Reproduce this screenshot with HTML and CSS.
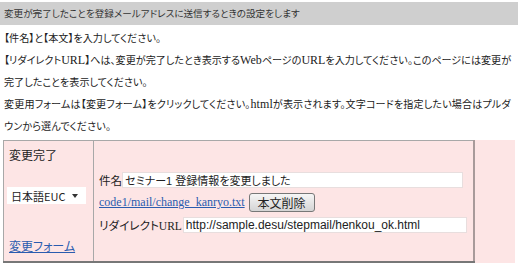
FILE: index.html
```html
<!DOCTYPE html>
<html lang="ja">
<head>
    <meta charset="UTF-8">
    <title>変更完了メール設定</title>
    <link rel="stylesheet" href="styles.css">
</head>
<body>

<div class="title">変更が完了したことを登録メールアドレスに送信するときの設定をします</div>

<div class="notes">
    <p>【件名】と【本文】を入力してください。</p>
    <p>【リダイレクト<span class="latin">URL</span>】へは、変更が完了したとき表示する<span class="latin">Web</span>ページの<span class="latin">URL</span>を入力してください。このページには変更が完了したことを表示してください。</p>
    <p class="last">変更用フォームは【変更フォーム】をクリックしてください。<span class="latin">html</span>が表示されます。文字コードを指定したい場合はプルダウンから選んでください。</p>
</div>

<div class="panel">
    <table class="mail-table">
        <tr>
            <td class="side">
                <div class="side-title">変更完了</div>
                <div class="select-wrap">
                    <select class="charset">
                        <option>日本語EUC</option>
                        <option>Shift_JIS</option>
                        <option>UTF-8</option>
                    </select>
                </div>
                <a href="#" class="side-link">変更フォーム</a>
            </td>
            <td class="main">
                <div class="row">
                    <label>件名</label>
                    <input type="text" class="subject" value="セミナー1 登録情報を変更しました">
                </div>
                <div class="row">
                    <a href="#" class="file-link">code1/mail/change_kanryo.txt</a>
                    <button type="button" class="btn">本文削除</button>
                </div>
                <div class="row">
                    <label>リダイレクト<span class="latin">URL</span></label>
                    <input type="text" class="redirect" value="http://sample.desu/stepmail/henkou_ok.html">
                </div>
            </td>
        </tr>
    </table>
</div>

</body>
</html>
```

FILE: styles.css
```css
body {
    margin: 0;
    padding: 2px 0 0 0;
    font-family: "Noto Sans CJK JP", sans-serif;
    font-size: 10.5px;
    color: #222;
    font-feature-settings: "palt";
}
.latin {
    font-family: "Liberation Serif", serif;
    font-size: 12px;
    line-height: 1;
}
.title {
    background-color: #cfcfcf;
    height: 23px;
    line-height: 23px;
    padding-left: 4px;
    font-size: 9.6px;
    color: #333;
}
.notes {
    padding: 2px 4px 0 4px;
    font-size: 10.1px;
}
.notes p {
    margin: 0;
    line-height: 22px;
}
.notes .last {
    letter-spacing: 0.12px;
}
.panel {
    background-color: #fde5e5;
    margin: 3px 3px 0 3px;
}
.mail-table {
    border-collapse: collapse;
    width: 472px;
    border-top: 1px solid #a8a8a8;
    border-left: 1px solid #a8a8a8;
    border-right: 2px solid #a89a9a;
    border-bottom: 2px solid #777;
}
.mail-table td {
    padding: 0;
}
.side {
    width: 89px;
    height: 120px;
    border-right: 1px solid #a8a8a8;
    vertical-align: top;
    font-size: 12px;
}
.side-title {
    padding: 5px 0 0 5px;
    height: 41px;
}
.select-wrap {
    position: relative;
    margin-left: 3px;
    width: 79px;
    height: 17px;
    background-color: #fff;
}
.select-wrap::after {
    content: "";
    position: absolute;
    right: 8px;
    top: 7px;
    border-left: 3px solid transparent;
    border-right: 3px solid transparent;
    border-top: 4px solid #333;
}
.charset {
    appearance: none;
    -webkit-appearance: none;
    width: 100%;
    height: 17px;
    font-family: "Noto Sans CJK JP", sans-serif;
    font-size: 11px;
    border: none;
    background: transparent;
    padding: 0 4px;
    color: #222;
}
.side-link {
    display: block;
    margin: 33px 0 0 5px;
    color: #2a5caf;
}
.mail-table .main {
    vertical-align: top;
    padding: 28px 0 0 5px;
}
.row {
    display: flex;
    align-items: center;
    height: 22.5px;
}
.row label {
    font-size: 11.6px;
}
.row label .latin {
    font-size: 11.5px;
}
.row input {
    height: 16px;
    box-sizing: border-box;
    border: 1px solid #e8dede;
    background-color: #fff;
    font-family: "Liberation Sans", "Noto Sans CJK JP", sans-serif;
    color: #222;
    padding: 0 2px;
}
.subject {
    width: 341px;
    font-size: 11px;
    font-feature-settings: "palt";
}
.redirect {
    width: 284px;
    margin-left: 1px;
    font-size: 12px;
    line-height: 14px;
}
.file-link {
    font-family: "Liberation Serif", serif;
    color: #2a5caf;
    font-size: 12px;
    margin-right: 4px;
}
.btn {
    height: 19px;
    width: 66px;
    padding: 0;
    border: 1px solid #777;
    border-radius: 3px;
    background: linear-gradient(#f6f6f6, #d4d4d4);
    font-family: "Noto Sans CJK JP", sans-serif;
    font-size: 12px;
    color: #222;
}
```
